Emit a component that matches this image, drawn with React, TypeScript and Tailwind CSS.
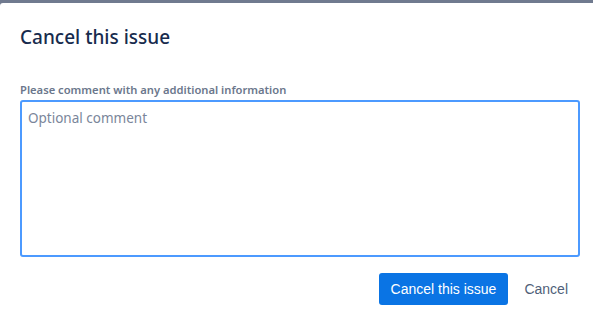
export default function App() {
  return (
    <div className="h-[319px] w-[593px] overflow-hidden bg-[#707a8f] pt-[3px]">
      <div className="flex h-full flex-col rounded-tl-[3px] bg-white px-5 font-['Noto_Sans',sans-serif]">
        <h2 className="mt-[22px] text-[19px] font-medium leading-6 text-[#172b4d]">Cancel this issue</h2>
        <label className="mt-[33px] text-[11.2px] font-semibold leading-4 text-[#6b778c]">
          Please comment with any additional information
        </label>
        <textarea
          autoFocus
          placeholder="Optional comment"
          className="mt-[2px] h-[157px] w-[560px] resize-none rounded-[3px] border-2 border-[#4c9aff] px-[6px] pt-[6px] pb-[6px] text-[13.5px] leading-5 text-[#172b4d] caret-[#172b4d] outline-none placeholder:text-[#7a869a]"
        />
        <div className="mt-4 flex items-center justify-end gap-3 pr-[1px] font-['Liberation_Sans',Arial,sans-serif] text-sm">
          <button className="h-[32px] rounded-[3px] bg-[#0a74e4] px-3 text-white">Cancel this issue</button>
          <button className="h-[32px] px-1 text-[#505f79]">Cancel</button>
        </div>
      </div>
    </div>
  );
}
